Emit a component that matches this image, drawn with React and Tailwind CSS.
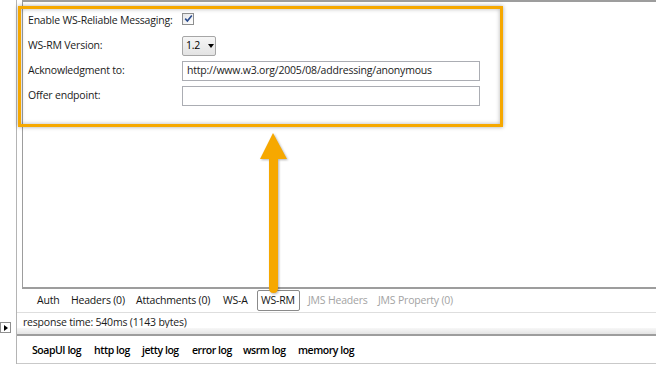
import React from "react";

const requestTabs = [
  { label: "Auth", w: "w-[30px]" },
  { label: "Headers (0)", w: "w-[61px]" },
  { label: "Attachments (0)", w: "w-[83px]" },
  { label: "WS-A", w: "w-[34px]" },
];

const logTabs = [
  { label: "SoapUI log", w: "w-[62px]" },
  { label: "http log", w: "w-[48px]" },
  { label: "jetty log", w: "w-[50px]" },
  { label: "error log", w: "w-[51px]" },
  { label: "wsrm log", w: "w-[55px]" },
  { label: "memory log", w: "w-auto" },
];

const Row = ({ label, children }) => (
  <div className="flex h-[25px] items-center">
    <div className="w-[154px] shrink-0 text-[#1b1b1b]">{label}</div>
    {children}
  </div>
);

const App = () => {
  return (
    <div className="relative h-[386px] w-[663px] overflow-hidden whitespace-nowrap bg-white font-['Open_Sans','Noto_Sans',sans-serif] text-[10.5px] leading-none tracking-[-0.2px] text-black">
      <div className="flex h-[364px]">
        {/* left collapsed strip */}
        <div className="flex w-[17px] shrink-0 flex-col border-r border-[#b4b4b4] pt-[322px]">
          <div className="flex h-[11px] w-[11px] items-center justify-center border border-[#8f8f8f] bg-white">
            <div className="h-0 w-0 border-y-[3.5px] border-l-[4px] border-y-transparent border-l-black" />
          </div>
        </div>

        <div className="flex flex-1 flex-col pr-[7px]">
          {/* WS-RM settings panel */}
          <div className="ml-[5px] h-[289px] border-b-2 border-l border-t-2 border-[#9d9d9d] pl-[5px] pt-[6px]">
            <Row label="Enable WS-Reliable Messaging:">
              <div className="mb-[4px] flex h-[12px] w-[12px] items-center justify-center border border-[#8e8f8f] bg-gradient-to-br from-[#e6e6e6] to-white">
                <svg width="9" height="9" viewBox="0 0 9 9">
                  <path d="M1.2 4.6 L3.4 7 L7.8 1.6" fill="none" stroke="#2a4b8d" strokeWidth="1.6" />
                </svg>
              </div>
            </Row>
            <Row label="WS-RM Version:">
              <div className="flex h-[20px] w-[34px] items-center rounded-[2px] border border-[#a6a6a6] bg-gradient-to-b from-[#f6f6f6] to-[#e3e3e3] pl-[3px]">
                <span>1.2</span>
                <div className="ml-[8px] h-0 w-0 border-x-[3.5px] border-t-[4px] border-x-transparent border-t-black" />
              </div>
            </Row>
            <Row label="Acknowledgment to:">
              <div className="flex h-[20px] w-[298px] items-center border border-[#abadb3] pl-[4px] text-[#1b1b1b]">
                http://www.w3.org/2005/08/addressing/anonymous
              </div>
            </Row>
            <Row label="Offer endpoint:">
              <div className="h-[20px] w-[298px] border border-[#abadb3]" />
            </Row>
          </div>

          {/* request tabs */}
          <div className="flex h-[24px] items-center gap-[4px] border-b border-[#dedede] pl-[16px]">
            {requestTabs.map((t) => (
              <div key={t.label} className={`${t.w} shrink-0 px-[4px] text-[#141414]`}>
                {t.label}
              </div>
            ))}
            <div className="flex h-[21px] w-[43px] shrink-0 items-center rounded-[2px] border border-[#8a8a8a] px-[3px] text-[#141414]">
              WS-RM
            </div>
            <div className="w-[66px] shrink-0 px-[4px] text-[#a3a3a3]">JMS Headers</div>
            <div className="shrink-0 px-[4px] text-[#a3a3a3]">JMS Property (0)</div>
          </div>

          {/* status */}
          <div className="flex h-[15px] items-center pl-[6px] pt-[3px] text-[#1b1b1b]">
            response time: 540ms (1143 bytes)
          </div>
          <div className="h-[6px] bg-gradient-to-b from-[#f7f7f7] to-[#e4e4e4]" />
          <div className="h-[2px] bg-[#9d9d9d]" />

          {/* log tabs */}
          <div className="flex h-[28px] items-center border-b border-[#c9c9c9] pl-[15px] pt-[2px] font-semibold tracking-[-0.45px]">
            {logTabs.map((t) => (
              <div key={t.label} className={`${t.w} shrink-0`}>
                {t.label}
              </div>
            ))}
          </div>
        </div>
      </div>

      {/* highlight annotation */}
      <div className="pointer-events-none absolute left-[18px] top-[6px] h-[121px] w-[485px] border-[3px] border-[#f6a800] shadow-[0_0_4px_rgba(0,0,0,0.35),inset_0_0_4px_rgba(0,0,0,0.3)]" />
      <svg
        className="pointer-events-none absolute left-[255px] top-[128px] drop-shadow-[1px_1px_1px_rgba(0,0,0,0.3)]"
        width="36"
        height="170"
        viewBox="0 0 36 170"
      >
        <path
          d="M18 5 L32 31 L23 31 L23 160 Q23 165 18.5 165 Q14 165 14 160 L14 31 L5 31 Z"
          fill="#f6a800"
        />
      </svg>
    </div>
  );
};

export default App;
